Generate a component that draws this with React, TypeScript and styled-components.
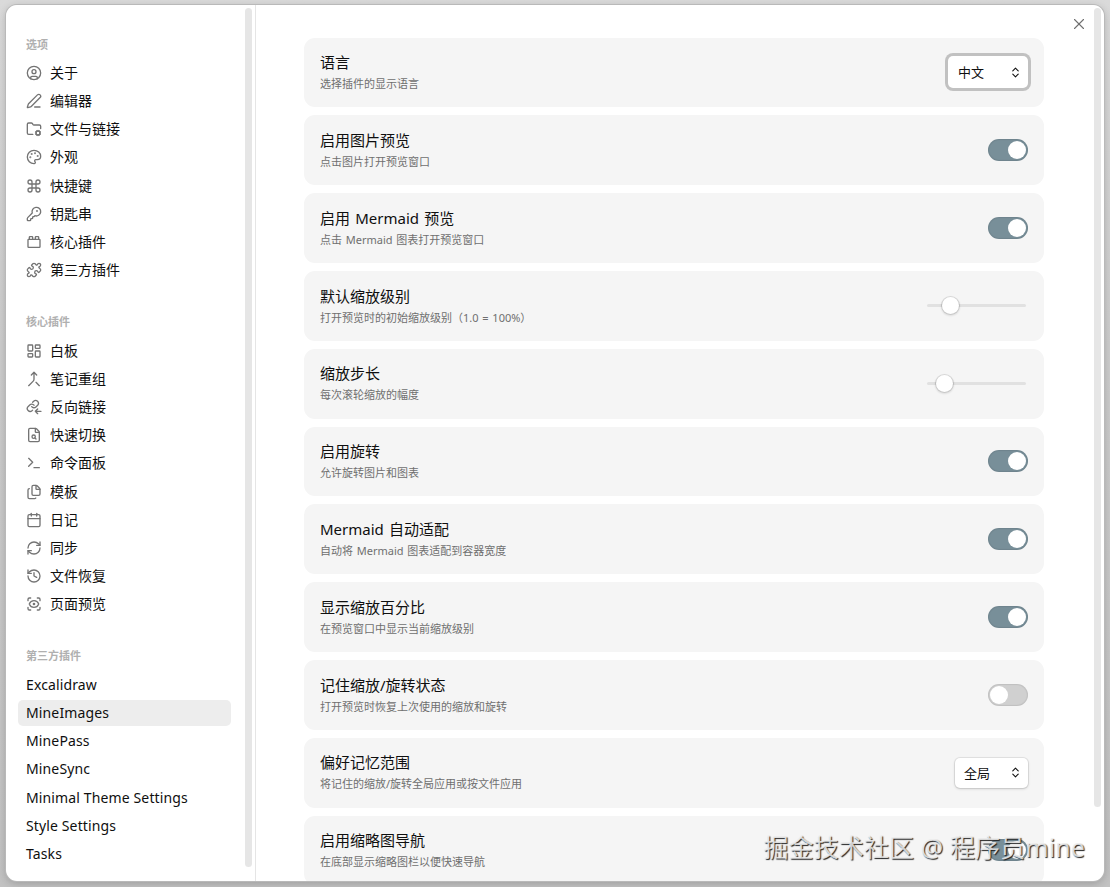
import React from 'react';
import styled, { createGlobalStyle, css } from 'styled-components';
import {
  CircleUser, PenLine, FolderCog, Palette, Command, KeyRound, ToyBrick, Puzzle,
  LayoutDashboard, Merge, FileSearch, Terminal, Files, Calendar, RefreshCw,
  History, ScanEye, X, ChevronsUpDown,
} from 'lucide-react';

const Global = createGlobalStyle`
  * { box-sizing: border-box; }
  body {
    margin: 0;
    overflow: hidden;
    background: #c9c9c9;
    font-family: "Noto Sans", "Noto Sans CJK SC", sans-serif;
    color: #0f0f0f;
  }
`;

const Backdrop = styled.div`
  height: 887px;
  padding: 5px 6px 6px;
  background: linear-gradient(#dadada, #cbcbcb 45%, #c2c2c2);
`;

const Modal = styled.div`
  position: relative;
  display: flex;
  height: 876px;
  border-radius: 11px;
  overflow: hidden;
  background: #fff;
`;

const ModalShadow = styled.div`
  border-radius: 11px;
  box-shadow: 0 0 0 1px #b9b9b9, 0 2px 8px rgba(0, 0, 0, 0.22);
`;

const Sidebar = styled.nav`
  display: flex;
  justify-content: space-between;
  width: 250px;
  border-right: 1px solid #e5e5e5;
  padding: 3px 3px 0 11.5px;
`;

const Groups = styled.div`
  width: 213.5px;
  padding-top: 28.5px;
`;

const Group = styled.section`
  margin-bottom: 31.4px;
`;

const GroupTitle = styled.h2`
  margin: 0 0 7.6px;
  padding-left: 8.5px;
  height: 16px;
  line-height: 16px;
  font-size: 11px;
  font-weight: 600;
  color: #b0b0b0;
`;

const Item = styled.a<{ $active?: boolean; $plain?: boolean }>`
  display: flex;
  align-items: center;
  gap: 8px;
  height: 26.12px;
  margin-bottom: 2px;
  padding-left: 8.5px;
  border-radius: 5px;
  font-size: 14px;
  line-height: 20px;
  letter-spacing: ${(p) => (p.$plain ? '0.13px' : 'normal')};
  white-space: nowrap;
  ${(p) => p.$active && css`background: #ededed;`}

  svg { width: 16px; height: 16px; color: #747474; stroke-width: 2px; flex: none; }
`;

const ScrollThumb = styled.div<{ $height: number }>`
  width: 7px;
  height: ${(p) => p.$height}px;
  border-radius: 4px;
  background: #e6e6e6;
`;

const Main = styled.main`
  display: flex;
  justify-content: space-between;
  flex: 1;
  padding: 3px 3px 0 48px;
`;

const Cards = styled.div`
  width: 739.5px;
  padding-top: 29.6px;
`;

const Card = styled.section`
  display: flex;
  align-items: center;
  justify-content: space-between;
  height: 69.8px;
  margin-bottom: 8px;
  padding: 0 15.5px 0 16px;
  border-radius: 11px;
  background: #f5f5f5;
`;

const Name = styled.div`
  font-size: 15px;
  line-height: 20px;
  word-spacing: 1.3px;
`;

const Desc = styled.div`
  margin-top: 3px;
  margin-bottom: 0.6px;
  font-size: 11px;
  line-height: 17px;
  word-spacing: 0.9px;
  color: #6f6f6f;
`;

const Toggle = styled.div<{ $on: boolean }>`
  display: flex;
  justify-content: ${(p) => (p.$on ? 'flex-end' : 'flex-start')};
  width: 40px;
  height: 22px;
  padding: 2px;
  border-radius: 11px;
  background: ${(p) => (p.$on ? '#788f99' : '#d0d0d0')};
  box-shadow: inset 0 0 1px 1px rgba(0, 0, 0, 0.08);

  &::after {
    content: '';
    width: 18px;
    height: 18px;
    border-radius: 50%;
    background: #fff;
  }
`;

const Select = styled.div<{ $focused?: boolean }>`
  display: flex;
  align-items: center;
  justify-content: space-between;
  width: 73.5px;
  height: 30px;
  padding: 0 6px 0 9.5px;
  border-radius: 5px;
  background: #fff;
  font-size: 13px;
  line-height: 28px;
  box-shadow: 0 0 0 1px rgba(0, 0, 0, 0.07), 0 1px 3px rgba(0, 0, 0, 0.16);
  ${(p) => p.$focused && css`
    width: 80px;
    height: 32px;
    padding-left: 10px;
    box-shadow: 0 0 0 3px #c1c1c1;
  `}
  svg { width: 13px; height: 13px; }
`;

const Track = styled.div<{ $offset: number }>`
  display: flex;
  align-items: center;
  width: 99px;
  height: 3px;
  margin-right: 2.5px;
  padding-left: ${(p) => p.$offset}px;
  border-radius: 2px;
  background: #e1e1e1;

  &::after {
    content: '';
    width: 17px;
    height: 17px;
    border-radius: 50%;
    background: #fff;
    box-shadow: 0 0 0 1px rgba(0, 0, 0, 0.1), 0 1px 2px 1px rgba(0, 0, 0, 0.1);
  }
`;

const Close = styled.div`
  position: absolute;
  top: 10px;
  right: 16px;
  color: #707070;
  svg { display: block; }
`;

const Watermark = styled.div`
  position: absolute;
  left: 763.5px;
  top: 829px;
  font-size: 25px;
  line-height: 36px;
  letter-spacing: 0.1px;
  white-space: nowrap;
  color: rgba(240, 240, 240, 0.85);
  text-shadow: 1px 1px 1px #222;
`;

const BacklinkIcon = () => (
  <svg viewBox="0 0 24 24" fill="none" stroke="currentColor" strokeLinecap="round" strokeLinejoin="round">
    <path d="M8.500 11.500a4.300 4.300 0 0 0 6.400.4l2.600-2.600a4.250 4.250 0 0 0-6-6l-1.500 1.500" />
    <path d="M12 9.300a4.300 4.300 0 0 0-6.400-.4l-2.600 2.600a4.250 4.250 0 0 0 6 6l.8-.8" />
    <path d="M22.500 18.500H14M17.500 15l-3.500 3.500 3.500 3.500" />
  </svg>
);

type NavItem = { label: string; icon?: React.ElementType };
const groups: { title: string; items: NavItem[] }[] = [
  { title: '选项', items: [
    { label: '关于', icon: CircleUser }, { label: '编辑器', icon: PenLine },
    { label: '文件与链接', icon: FolderCog }, { label: '外观', icon: Palette },
    { label: '快捷键', icon: Command }, { label: '钥匙串', icon: KeyRound },
    { label: '核心插件', icon: ToyBrick }, { label: '第三方插件', icon: Puzzle },
  ] },
  { title: '核心插件', items: [
    { label: '白板', icon: LayoutDashboard }, { label: '笔记重组', icon: Merge },
    { label: '反向链接', icon: BacklinkIcon }, { label: '快速切换', icon: FileSearch },
    { label: '命令面板', icon: Terminal }, { label: '模板', icon: Files },
    { label: '日记', icon: Calendar }, { label: '同步', icon: RefreshCw },
    { label: '文件恢复', icon: History }, { label: '页面预览', icon: ScanEye },
  ] },
  { title: '第三方插件', items: [
    'Excalidraw', 'MineImages', 'MinePass', 'MineSync', 'Minimal Theme Settings', 'Style Settings', 'Tasks',
  ].map((label) => ({ label })) },
];

const on = <Toggle $on />;
const settings: [string, string, React.ReactNode][] = [
  ['语言', '选择插件的显示语言', <Select $focused>中文<ChevronsUpDown /></Select>],
  ['启用图片预览', '点击图片打开预览窗口', on],
  ['启用 Mermaid 预览', '点击 Mermaid 图表打开预览窗口', on],
  ['默认缩放级别', '打开预览时的初始缩放级别（1.0 = 100%）', <Track $offset={15} />],
  ['缩放步长', '每次滚轮缩放的幅度', <Track $offset={9} />],
  ['启用旋转', '允许旋转图片和图表', on],
  ['Mermaid 自动适配', '自动将 Mermaid 图表适配到容器宽度', on],
  ['显示缩放百分比', '在预览窗口中显示当前缩放级别', on],
  ['记住缩放/旋转状态', '打开预览时恢复上次使用的缩放和旋转', <Toggle $on={false} />],
  ['偏好记忆范围', '将记住的缩放/旋转全局应用或按文件应用', <Select>全局<ChevronsUpDown /></Select>],
  ['启用缩略图导航', '在底部显示缩略图栏以便快速导航', on],
];

export default function App() {
  return (
    <Backdrop>
      <Global />
      <ModalShadow>
        <Modal>
          <Sidebar>
            <Groups>
              {groups.map((g) => (
                <Group key={g.title}>
                  <GroupTitle>{g.title}</GroupTitle>
                  {g.items.map(({ label, icon: Icon }) => (
                    <Item key={label} $active={label === 'MineImages'} $plain={!Icon}>
                      {Icon && <Icon />}
                      {label}
                    </Item>
                  ))}
                </Group>
              ))}
            </Groups>
            <ScrollThumb $height={859} />
          </Sidebar>
          <Main>
            <Cards>
              {settings.map(([name, desc, control]) => (
                <Card key={name}>
                  <div>
                    <Name>{name}</Name>
                    <Desc>{desc}</Desc>
                  </div>
                  {control}
                </Card>
              ))}
            </Cards>
            <ScrollThumb $height={799} />
          </Main>
          <Close><X size={18} strokeWidth={1.5} /></Close>
        </Modal>
      </ModalShadow>
      <Watermark>掘金技术社区 @ 程序员mine</Watermark>
    </Backdrop>
  );
}
